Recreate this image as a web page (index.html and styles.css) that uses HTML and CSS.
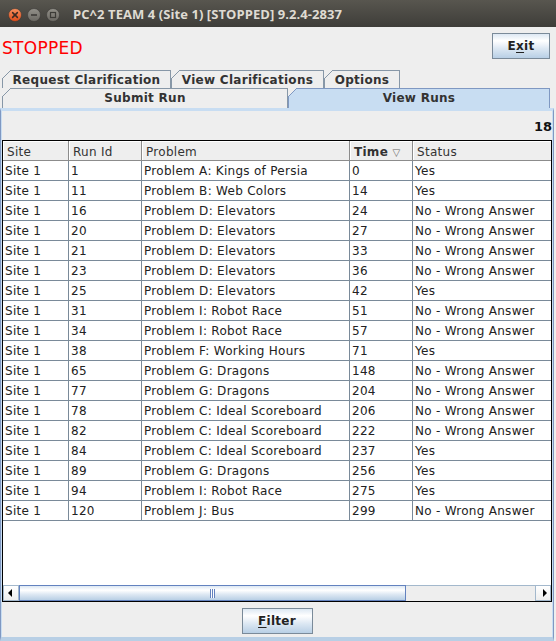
FILE: index.html
```html
<!DOCTYPE html>
<html>
<head>
<meta charset="utf-8">
<title>PC^2 TEAM 4</title>
<link rel="stylesheet" href="styles.css">
</head>
<body>
<div class="window">
  <header class="titlebar">
    <div class="wbtns">
      <svg class="wbtn" width="14" height="14" viewBox="0 0 14 14">
        <defs>
          <linearGradient id="gc" x1="0" y1="0" x2="0" y2="1">
            <stop offset="0" stop-color="#f7915f"/>
            <stop offset="1" stop-color="#de4a18"/>
          </linearGradient>
          <linearGradient id="gg" x1="0" y1="0" x2="0" y2="1">
            <stop offset="0" stop-color="#93918a"/>
            <stop offset="1" stop-color="#6a6862"/>
          </linearGradient>
        </defs>
        <circle cx="7" cy="7" r="6.5" fill="url(#gc)" stroke="#3a3935" stroke-width="0.6"/>
        <path d="M4.6 4.6 L9.4 9.4 M9.4 4.6 L4.6 9.4" stroke="#3b2a22" stroke-width="1.5" stroke-linecap="round"/>
      </svg>
      <svg class="wbtn" width="14" height="14" viewBox="0 0 14 14">
        <circle cx="7" cy="7" r="6.5" fill="url(#gg)" stroke="#3a3935" stroke-width="0.6"/>
        <path d="M4 7 H10" stroke="#3c3b37" stroke-width="1.6"/>
      </svg>
      <svg class="wbtn" width="14" height="14" viewBox="0 0 14 14">
        <circle cx="7" cy="7" r="6.5" fill="url(#gg)" stroke="#3a3935" stroke-width="0.6"/>
        <rect x="4.5" y="4.5" width="5" height="5" fill="none" stroke="#3c3b37" stroke-width="1.2"/>
      </svg>
    </div>
    <div class="title">PC^2 TEAM 4 (Site 1) [STOPPED] 9.2.4-2837</div>
  </header>

  <div class="topbar">
    <div class="status">STOPPED</div>
    <button class="btn exit">E<u>x</u>it</button>
  </div>

  <div class="tabs">
    <div class="tabrow back">
      <div class="tab t-req">Request Clarification</div>
      <div class="tab t-viewclar">View Clarifications</div>
      <div class="tab t-opt">Options</div>
    </div>
    <div class="tabrow front">
      <div class="tab t-submit">Submit Run</div>
      <div class="tab t-runs selected">View Runs</div>
    </div>
  </div>

  <div class="panel">
    <div class="count">18</div>
    <div class="scrollpane">
      <div class="viewport">
        <table class="runs">
          <colgroup>
            <col class="c-site"><col class="c-id"><col class="c-prob"><col class="c-time"><col class="c-status">
          </colgroup>
          <thead>
            <tr><th>Site</th><th>Run Id</th><th>Problem</th><th class="sorted">Time <span class="sort">▽</span></th><th>Status</th></tr>
          </thead>
          <tbody>
            <tr><td>Site 1</td><td>1</td><td>Problem A: Kings of Persia</td><td>0</td><td>Yes</td></tr>
            <tr><td>Site 1</td><td>11</td><td>Problem B: Web Colors</td><td>14</td><td>Yes</td></tr>
            <tr><td>Site 1</td><td>16</td><td>Problem D: Elevators</td><td>24</td><td>No - Wrong Answer</td></tr>
            <tr><td>Site 1</td><td>20</td><td>Problem D: Elevators</td><td>27</td><td>No - Wrong Answer</td></tr>
            <tr><td>Site 1</td><td>21</td><td>Problem D: Elevators</td><td>33</td><td>No - Wrong Answer</td></tr>
            <tr><td>Site 1</td><td>23</td><td>Problem D: Elevators</td><td>36</td><td>No - Wrong Answer</td></tr>
            <tr><td>Site 1</td><td>25</td><td>Problem D: Elevators</td><td>42</td><td>Yes</td></tr>
            <tr><td>Site 1</td><td>31</td><td>Problem I: Robot Race</td><td>51</td><td>No - Wrong Answer</td></tr>
            <tr><td>Site 1</td><td>34</td><td>Problem I: Robot Race</td><td>57</td><td>No - Wrong Answer</td></tr>
            <tr><td>Site 1</td><td>38</td><td>Problem F: Working Hours</td><td>71</td><td>Yes</td></tr>
            <tr><td>Site 1</td><td>65</td><td>Problem G: Dragons</td><td>148</td><td>No - Wrong Answer</td></tr>
            <tr><td>Site 1</td><td>77</td><td>Problem G: Dragons</td><td>204</td><td>No - Wrong Answer</td></tr>
            <tr><td>Site 1</td><td>78</td><td>Problem C: Ideal Scoreboard</td><td>206</td><td>No - Wrong Answer</td></tr>
            <tr><td>Site 1</td><td>82</td><td>Problem C: Ideal Scoreboard</td><td>222</td><td>No - Wrong Answer</td></tr>
            <tr><td>Site 1</td><td>84</td><td>Problem C: Ideal Scoreboard</td><td>237</td><td>Yes</td></tr>
            <tr><td>Site 1</td><td>89</td><td>Problem G: Dragons</td><td>256</td><td>Yes</td></tr>
            <tr><td>Site 1</td><td>94</td><td>Problem I: Robot Race</td><td>275</td><td>Yes</td></tr>
            <tr><td>Site 1</td><td>120</td><td>Problem J: Bus</td><td>299</td><td>No - Wrong Answer</td></tr>
          </tbody>
        </table>
      </div>
      <div class="hscroll">
        <div class="sb-btn left"><span class="arrow-left"></span></div>
        <div class="sb-thumb"><span class="grip"></span></div>
        <div class="sb-track"></div>
        <div class="sb-btn right"><span class="arrow-right"></span></div>
      </div>
    </div>
    <div class="footer">
      <button class="btn filter"><u>F</u>ilter</button>
    </div>
  </div>
</div>
</body>
</html>
```

FILE: styles.css
```css
html, body {
  margin: 0;
  padding: 0;
}
body {
  width: 556px;
  height: 641px;
  overflow: hidden;
  background: #eeeeee;
  font-family: "DejaVu Sans", "Liberation Sans", sans-serif;
  font-size: 12px;
  letter-spacing: 0.28px;
  color: #222222;
}
.window {
  width: 556px;
  height: 641px;
  display: flex;
  flex-direction: column;
}

/* title bar */
.titlebar {
  height: 27px;
  flex: none;
  display: flex;
  align-items: center;
  background: linear-gradient(#58564f, #3e3d39);
}
.wbtns {
  display: flex;
  gap: 5px;
  margin-left: 8px;
  margin-top: 2px;
}
.wbtn {
  display: block;
}
.title {
  margin-left: 13px;
  color: #dfdbd2;
  font-family: "Open Sans", "DejaVu Sans", sans-serif;
  font-weight: 700;
  font-size: 13px;
  letter-spacing: 0.07px;
  margin-top: 1px;
  white-space: nowrap;
}

/* top bar */
.topbar {
  height: 43px;
  flex: none;
  display: flex;
  justify-content: space-between;
  align-items: flex-start;
  padding: 0 6px 0 2px;
  box-sizing: border-box;
}
.status {
  color: #ff0000;
  font-size: 17px;
  line-height: 20px;
  margin-top: 11px;
}
.btn {
  font-family: "DejaVu Sans", sans-serif;
  font-weight: bold;
  font-size: 12px;
  letter-spacing: 0.28px;
  color: #222222;
  border: 1px solid #7a8a99;
  border-radius: 0;
  padding: 0;
  background: linear-gradient(#dde8f3 0%, #ffffff 28%, #eef3f9 45%, #dde8f3 60%, #b8cfe5 100%);
}
.btn u {
  text-decoration-thickness: 1px;
  text-underline-offset: 2px;
}
.exit {
  width: 58px;
  height: 26px;
  margin-top: 6px;
}

/* tabs */
.tabs {
  flex: none;
  height: 38px;
}
.tabrow {
  display: flex;
  padding-left: 2px;
}
.tabrow.back {
  height: 18px;
}
.tabrow.front {
  height: 20px;
}
.tab {
  position: relative;
  box-sizing: border-box;
  height: 100%;
  border: 1px solid #8797a7;
  border-bottom: none;
  text-align: center;
  font-weight: bold;
  color: #333333;
  background: #eeeeee;
  white-space: nowrap;
  padding-top: 1px;
  line-height: 16px;
}
.tab::before {
  content: "";
  position: absolute;
  left: -1px;
  top: -1px;
  width: 9px;
  height: 9px;
  background: linear-gradient(135deg, #eeeeee 0 calc(50% - 0.7px), #8797a7 calc(50% - 0.7px) calc(50% + 0.7px), transparent calc(50% + 0.7px));
}
.t-req { width: 169px; }
.t-viewclar { width: 153px; }
.t-opt { width: 76px; }
.t-submit { width: 286px; }
.t-runs { width: 262px; }
.tab.selected {
  background: #c8ddf2;
  border-color: #7f98c2;
}
.tab.selected::before {
  background: linear-gradient(135deg, #eeeeee 0 calc(50% - 0.7px), #7f98c2 calc(50% - 0.7px) calc(50% + 0.7px), transparent calc(50% + 0.7px));
}

/* panel */
.panel {
  flex: none;
  box-sizing: border-box;
  width: 554px;
  height: 533px;
  border: 1px solid #7f98c2;
  border-top: 3px solid #c8ddf2;
  border-bottom: 4px solid #b8cfe5;
  padding: 0 1px;
  box-shadow: inset 1px 0 #c8ddf2, inset -1px 0 #c8ddf2;
  display: flex;
  flex-direction: column;
}
.count {
  height: 29px;
  box-sizing: border-box;
  padding-top: 9px;
  text-align: right;
  font-weight: bold;
  font-size: 13px;
  line-height: 14px;
  letter-spacing: 0;
  color: #111111;
}
.scrollpane {
  border: 1px solid #000000;
  display: flex;
  flex-direction: column;
}
.viewport {
  height: 444px;
  background: #ffffff;
  overflow: hidden;
}
.runs {
  width: 100%;
  table-layout: fixed;
  border-collapse: separate;
  border-spacing: 0;
}
.c-site { width: 66px; }
.c-id { width: 73px; }
.c-prob { width: 208px; }
.c-time { width: 63px; }
.runs th,
.runs td {
  box-sizing: border-box;
  white-space: nowrap;
  overflow: hidden;
  text-align: left;
  font-size: 12px;
  border-right: 1px solid #7a8a99;
  border-bottom: 1px solid #7a8a99;
}
.runs th:last-child,
.runs td:last-child {
  border-right: none;
}
.runs th {
  background: #eeeeee;
  font-weight: normal;
  color: #333333;
  padding: 3px 0 0 4px;
  line-height: 16px;
  height: 20px;
  border-right-color: #8c8c8c;
  border-bottom-color: #8c8c8c;
  box-shadow: inset 1px 1px #ffffff;
}
.runs th.sorted {
  font-weight: bold;
}
.sort {
  font-weight: normal;
  font-size: 10px;
  line-height: 0;
  color: #666666;
}
.runs td {
  padding: 1px 0 0 2px;
  line-height: 18px;
  color: #222222;
}

/* horizontal scroll bar */
.hscroll {
  height: 16px;
  display: flex;
  background: #eeeeee;
}
.sb-btn {
  width: 16px;
  flex: none;
  box-sizing: border-box;
  border: 1px solid #a3b8cc;
  background: linear-gradient(#ffffff, #eeeeee);
  display: flex;
  align-items: center;
  justify-content: center;
}
.arrow-left {
  width: 0;
  height: 0;
  border-top: 4px solid transparent;
  border-bottom: 4px solid transparent;
  border-right: 4px solid #000000;
  margin-right: 3px;
}
.arrow-right {
  width: 0;
  height: 0;
  border-top: 4px solid transparent;
  border-bottom: 4px solid transparent;
  border-left: 4px solid #000000;
  margin-left: 3px;
}
.sb-thumb {
  width: 387px;
  flex: none;
  box-sizing: border-box;
  border: 1px solid #6382bf;
  background: linear-gradient(#dde8f3 0%, #ffffff 30%, #dde8f3 60%, #b8cfe5 100%);
  display: flex;
  align-items: center;
  justify-content: center;
}
.grip {
  width: 5px;
  height: 9px;
  background: repeating-linear-gradient(90deg, #6382bf 0 1px, #ffffff 1px 2px);
}
.sb-track {
  flex: 1;
  box-sizing: border-box;
  border-top: 1px solid #a3b8cc;
  background: #eeeeee;
}

/* footer */
.footer {
  display: flex;
  justify-content: center;
  padding-top: 6px;
}
.filter {
  width: 71px;
  height: 26px;
}
```
